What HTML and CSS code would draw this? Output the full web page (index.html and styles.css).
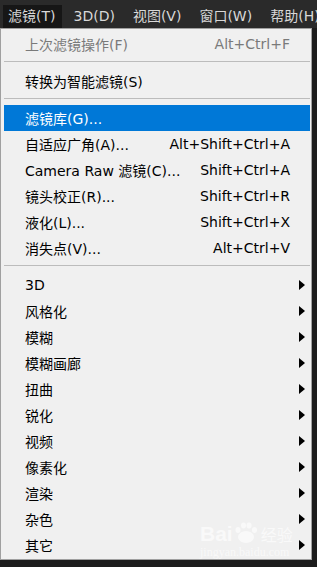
FILE: index.html
```html
<!DOCTYPE html>
<html lang="zh-CN">
<head>
    <meta charset="UTF-8">
    <meta name="viewport" content="width=device-width, initial-scale=1.0">
    <title>滤镜菜单</title>
    <link rel="stylesheet" href="styles.css">
</head>
<body>
    <nav class="menubar">
        <span class="menubar-item active">滤镜(T)</span>
        <span class="menubar-item">3D(D)</span>
        <span class="menubar-item">视图(V)</span>
        <span class="menubar-item">窗口(W)</span>
        <span class="menubar-item">帮助(H)</span>
    </nav>
    <div class="menu">
        <div class="row disabled"><span class="label">上次滤镜操作(F)</span><span class="key">Alt+Ctrl+F</span><span class="arrow-cell"></span></div>
        <div class="sep"></div>
        <div class="row"><span class="label">转换为智能滤镜(S)</span><span class="arrow-cell"></span></div>
        <div class="sep"></div>
        <div class="row selected"><span class="label">滤镜库(G)...</span><span class="arrow-cell"></span></div>
        <div class="row"><span class="label">自适应广角(A)...</span><span class="key">Alt+Shift+Ctrl+A</span><span class="arrow-cell"></span></div>
        <div class="row"><span class="label">Camera Raw 滤镜(C)...</span><span class="key">Shift+Ctrl+A</span><span class="arrow-cell"></span></div>
        <div class="row"><span class="label">镜头校正(R)...</span><span class="key">Shift+Ctrl+R</span><span class="arrow-cell"></span></div>
        <div class="row"><span class="label">液化(L)...</span><span class="key">Shift+Ctrl+X</span><span class="arrow-cell"></span></div>
        <div class="row"><span class="label">消失点(V)...</span><span class="key">Alt+Ctrl+V</span><span class="arrow-cell"></span></div>
        <div class="sep"></div>
        <div class="row"><span class="label">3D</span><span class="arrow-cell"><i class="arrow"></i></span></div>
        <div class="row"><span class="label">风格化</span><span class="arrow-cell"><i class="arrow"></i></span></div>
        <div class="row"><span class="label">模糊</span><span class="arrow-cell"><i class="arrow"></i></span></div>
        <div class="row"><span class="label">模糊画廊</span><span class="arrow-cell"><i class="arrow"></i></span></div>
        <div class="row"><span class="label">扭曲</span><span class="arrow-cell"><i class="arrow"></i></span></div>
        <div class="row"><span class="label">锐化</span><span class="arrow-cell"><i class="arrow"></i></span></div>
        <div class="row"><span class="label">视频</span><span class="arrow-cell"><i class="arrow"></i></span></div>
        <div class="row"><span class="label">像素化</span><span class="arrow-cell"><i class="arrow"></i></span></div>
        <div class="row"><span class="label">渲染</span><span class="arrow-cell"><i class="arrow"></i></span></div>
        <div class="row"><span class="label">杂色</span><span class="arrow-cell"><i class="arrow"></i></span></div>
        <div class="row"><span class="label">其它</span><span class="arrow-cell"><i class="arrow"></i></span></div>

        <!-- watermark over the bottom rows -->
        <div class="watermark">
            <div class="wm-logo">
                <span>Bai</span>
                <svg class="wm-paw" width="24" height="22" viewBox="0 0 24 22">
                    <ellipse cx="12" cy="15" rx="8" ry="6"/>
                    <ellipse cx="4" cy="8" rx="2.5" ry="3"/>
                    <ellipse cx="9.5" cy="3.5" rx="2.5" ry="3"/>
                    <ellipse cx="15" cy="3.5" rx="2.5" ry="3"/>
                    <ellipse cx="20.5" cy="8" rx="2.5" ry="3"/>
                </svg>
                <span>经验</span>
            </div>
            <div class="wm-url">jingyan.baidu.com</div>
        </div>
    </div>
</body>
</html>
```

FILE: styles.css
```css
body {
    margin: 0;
    padding: 0;
    background-color: #1c1c1c;
    font-family: "DejaVu Sans", "Noto Sans CJK SC", sans-serif;
    width: 317px;
    height: 567px;
    overflow: hidden;
}
.menubar {
    display: flex;
    height: 28px;
    background-color: #2a2a2a;
    padding-left: 3px;
    box-sizing: border-box;
    white-space: nowrap;
    overflow: hidden;
}
.menubar-item {
    color: #d8d8d8;
    font-size: 14px;
    line-height: 22px;
    margin-top: 5px;
    padding: 0 7px 0 5px;
    margin-right: 6px;
}
.menubar-item.active {
    background-color: #161616;
}
.menu {
    position: relative;
    width: 312px;
    box-sizing: border-box;
    background-color: #f0f0f0;
    border: 1px solid #a0a0a0;
    padding: 2px 1px 1px 3px;
    font-size: 14px;
    color: #000;
}
.row {
    display: flex;
    align-items: center;
    height: 26px;
    padding: 0 5px 0 21px;
    white-space: nowrap;
}
.row .label {
    flex: 1;
}
.row .key {
    text-align: right;
}
.arrow-cell {
    width: 15px;
    display: flex;
    justify-content: flex-end;
}
.arrow {
    width: 0;
    height: 0;
    border-top: 5px solid transparent;
    border-bottom: 5px solid transparent;
    border-left: 6px solid #000;
}
.row.disabled {
    color: #7a7a7a;
}
.row.selected {
    background-color: #0078d7;
    color: #fff;
}
.sep {
    height: 1px;
    background-color: #bcbcbc;
    margin: 4px 0 6px;
}
.watermark {
    position: absolute;
    left: 199px;
    top: 493px;
    color: #f9f9f9;
    font-family: "Liberation Sans", sans-serif;
    pointer-events: none;
}
.wm-logo {
    display: flex;
    align-items: flex-end;
    font-size: 21px;
    font-weight: bold;
    line-height: 20px;
}
.wm-logo span:last-child {
    font-family: "Noto Sans CJK SC", sans-serif;
    font-size: 16px;
    font-weight: normal;
    margin-left: 2px;
}
.wm-paw {
    fill: #f9f9f9;
    margin: 0 1px;
}
.wm-url {
    font-family: "Liberation Serif", serif;
    font-size: 12px;
    line-height: 13px;
    margin-top: 2px;
}
```
